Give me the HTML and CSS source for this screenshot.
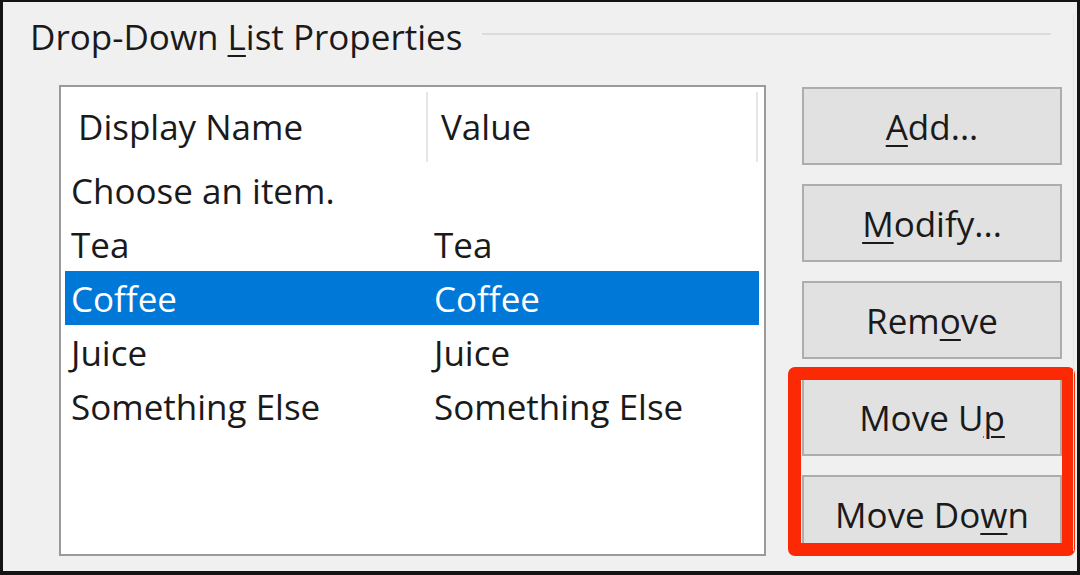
FILE: index.html
```html
<!DOCTYPE html>
<html>
<head>
<meta charset="utf-8">
<link rel="stylesheet" href="styles.css">
</head>
<body>
<div class="window">
  <div class="legend">
    <span class="legend-text">Drop-Down <u>L</u>ist Properties</span>
    <span class="legend-line"></span>
  </div>
  <div class="content">
    <div class="listbox">
      <div class="list-header">
        <div class="hcell hcell-name">Display Name</div>
        <div class="hcell hcell-value">Value</div>
      </div>
      <div class="rows">
        <div class="row"><span>Choose an item.</span><span></span></div>
        <div class="row"><span>Tea</span><span>Tea</span></div>
        <div class="row selected"><span>Coffee</span><span>Coffee</span></div>
        <div class="row"><span>Juice</span><span>Juice</span></div>
        <div class="row"><span>Something Else</span><span>Something Else</span></div>
      </div>
    </div>
    <div class="buttons">
      <div class="btn"><u>A</u>dd...</div>
      <div class="btn"><u>M</u>odify...</div>
      <div class="btn">Rem<u>o</u>ve</div>
      <div class="btn">Move U<u>p</u></div>
      <div class="btn">Move Do<u>w</u>n</div>
      <div class="highlight"></div>
    </div>
  </div>
</div>
</body>
</html>
```

FILE: styles.css
```css
html, body {
  margin: 0;
  padding: 0;
}

body {
  width: 1080px;
  height: 575px;
  overflow: hidden;
  font-family: "Open Sans", "Noto Sans", sans-serif;
  color: #1a1a1a;
}

.window {
  box-sizing: border-box;
  width: 1080px;
  height: 575px;
  background: #f0f0f0;
  border-style: solid;
  border-color: #141414;
  border-width: 2px 3px 4px 3px;
  position: relative;
}

.window::after {
  content: "";
  position: absolute;
  right: 3px;
  top: 12px;
  bottom: 20px;
  width: 1px;
  background: #e4e4e4;
}

.legend {
  display: flex;
  height: 70px;
  padding-left: 27px;
  padding-right: 26px;
  margin-top: 1px;
}

.legend-text {
  font-size: 35px;
  line-height: 70px;
  position: relative;
  top: -1px;
  white-space: nowrap;
}

.legend-line {
  flex: 1;
  height: 2px;
  background: #dcdcdc;
  margin-left: 20px;
  margin-top: 30px;
}

.content {
  display: flex;
  align-items: flex-start;
  margin-top: 12px;
}

.listbox {
  box-sizing: border-box;
  width: 707px;
  height: 471px;
  margin-left: 56px;
  border: 2px solid #9a9a9a;
  background: #ffffff;
  font-size: 35px;
}

.list-header {
  display: flex;
  height: 76px;
  padding-top: 5px;
  box-sizing: border-box;
}

.hcell {
  box-sizing: border-box;
  height: 70px;
  display: flex;
  align-items: center;
  border-right: 2px solid #e6e6e6;
  padding-bottom: 2px;
}

.hcell-name {
  width: 367px;
  padding-left: 17px;
}

.hcell-value {
  width: 330px;
  padding-left: 13px;
}

.rows {
  padding: 0 5px 0 4px;
}

.row {
  display: grid;
  grid-template-columns: 363px 1fr;
  height: 54px;
  align-items: center;
  padding-left: 6px;
  white-space: nowrap;
}

.row.selected {
  background: #0078d7;
  color: #ffffff;
}

.buttons {
  position: relative;
  display: flex;
  flex-direction: column;
  gap: 19px;
  width: 260px;
  margin-left: 36px;
  margin-top: 2px;
}

.btn {
  box-sizing: border-box;
  height: 78px;
  border: 2px solid #adadad;
  background: #e1e1e1;
  display: flex;
  align-items: center;
  justify-content: center;
  font-size: 35px;
  padding-top: 1px;
  white-space: nowrap;
}

.btn u, .legend-text u {
  text-underline-offset: 5px;
  text-decoration-thickness: 2px;
}

.highlight {
  position: absolute;
  left: -14px;
  top: 280px;
  width: 287px;
  height: 189px;
  box-sizing: border-box;
  border: 13px solid #fb2a04;
  border-radius: 7px;
}
```
